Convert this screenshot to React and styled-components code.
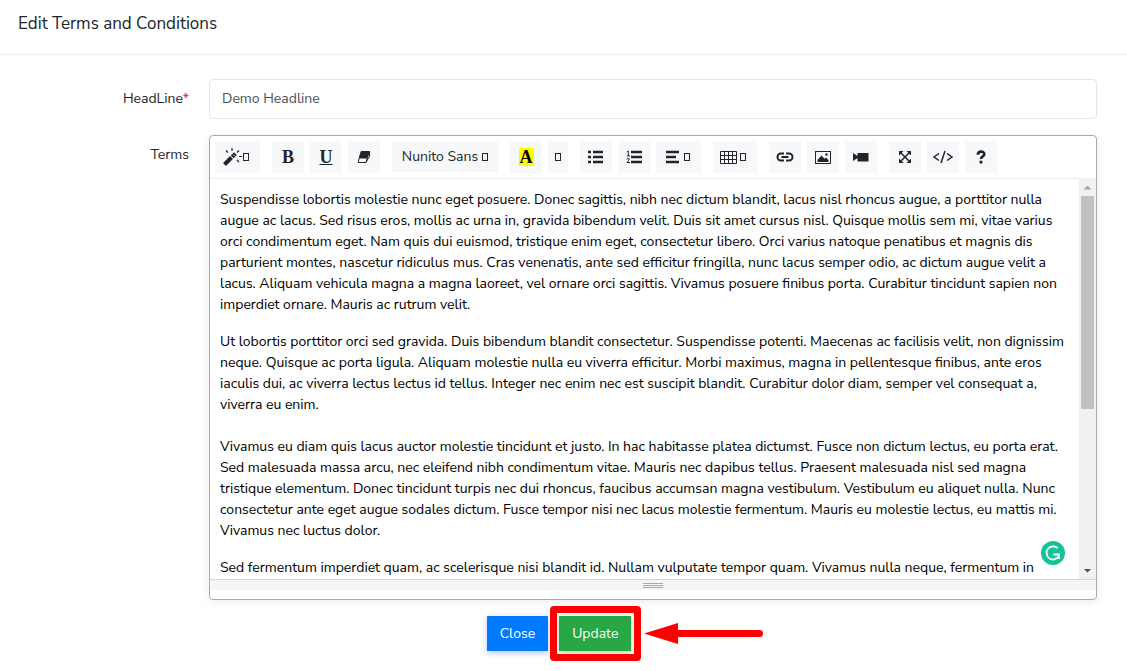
import React from "react";
import styled, { createGlobalStyle, css } from "styled-components";

const GlobalStyle = createGlobalStyle`
  *, *::before, *::after { box-sizing: border-box; }
  body {
    margin: 0;
    background: #fff;
    color: #212529;
    font: 14px/21px "Nunito Sans", Nunito, Lato, sans-serif;
  }
`;

const Header = styled.header`
  height: 55px;
  padding: 12px 18px;
  border-bottom: 1px solid #ebedf2;
`;

const Title = styled.h1`
  margin: 0;
  font-size: 17px;
  font-weight: 400;
  line-height: 24px;
`;

const Form = styled.form`
  display: grid;
  gap: 16px;
  padding: 24px 30px 20px;
`;

const Field = styled.div`
  display: grid;
  grid-template-columns: 159px minmax(0, 1fr);
  column-gap: 20px;
  align-items: start;
`;

const Label = styled.label`
  padding-top: 9px;
  text-align: right;
`;

const Required = styled.span`
  color: #f0263c;
`;

const TextInput = styled.input`
  width: 100%;
  height: 40px;
  padding: 0 12px 2px;
  border: 1px solid #e2e5ec;
  border-radius: 4px;
  color: #495057;
  font: inherit;
  outline: none;
`;

const Editor = styled.div`
  border: 1px solid #a9a9a9;
  border-radius: 4px;
  box-shadow: 0 2px 8px rgba(69, 65, 78, 0.1);
  padding-bottom: 9px;
`;

const Toolbar = styled.div`
  display: flex;
  flex-wrap: wrap;
  gap: 12px;
  padding: 5px;
  border-bottom: 1px solid #ebedf2;
`;

const Group = styled.div`
  display: flex;
  gap: 6px;
`;

const ToolButton = styled.button`
  display: flex;
  align-items: center;
  justify-content: center;
  width: ${(p) => p.$width || 32}px;
  height: 32px;
  padding: 0 ${(p) => (p.$menu ? 4 : 0)}px 0 0;
  border: 0;
  background: #f7f8fa;
  color: #212529;
  font: inherit;
  ${(p) => p.$wide && css`gap: 4px; height: 31px;`}
`;

const Caret = styled.span`
  width: 6px;
  height: 8px;
  border: 1px solid #212529;
`;

const Letter = styled.span`
  font: bold 18px/18px "Liberation Serif", serif;
  ${(p) => p.$underline && css`text-decoration: underline; text-decoration-thickness: 1px;`}
  ${(p) => p.$marked && css`background: #ff0; color: #000; padding: 0 1px;`}
`;

const Glyph = styled.svg`
  display: block;
  flex: none;
  width: 20px;
  height: 20px;
`;

const EditArea = styled.div`
  position: relative;
  display: grid;
  grid-template-columns: minmax(0, 1fr) 17px;
  height: 400px;
`;

const Content = styled.div`
  overflow: hidden;
  padding: 10px 10px 0;
  color: #000;
  white-space: nowrap;
  outline: none;

  p { margin: 0 0 16px; }
`;

const ScrollTrack = styled.div`
  display: grid;
  grid-template-rows: 17px 213px 1fr 17px;
  justify-items: center;
  background: #f1f1f1;
`;

const ScrollThumb = styled.div`
  width: 13px;
  background: #c1c1c1;
`;

const ScrollArrow = styled.span`
  align-self: center;
  width: 8px;
  height: 4px;
  background: ${(p) => (p.$down ? "#505050" : "#a3a3a3")};
  clip-path: ${(p) => (p.$down ? "polygon(0 0, 100% 0, 50% 100%)" : "polygon(50% 0, 100% 100%, 0 100%)")};
  grid-row: ${(p) => (p.$down ? 4 : 1)};
`;

const Assistant = styled.svg`
  position: absolute;
  right: 31px;
  bottom: 14px;
  width: 24px;
  height: 24px;
`;

const StatusBar = styled.div`
  display: flex;
  flex-direction: column;
  align-items: center;
  gap: 1px;
  height: 11px;
  padding-top: 3px;
  border-top: 1px solid #d5d5d5;
  background: #f5f5f5;
`;

const Grip = styled.span`
  width: 20px;
  height: 1px;
  background: #a9a9a9;
`;

const Actions = styled.div`
  display: flex;
  justify-content: center;
  gap: 11px;
  padding-right: 9px;
`;

const ActionButton = styled.button`
  height: 35px;
  padding: 0 13px;
  border: 0;
  background: ${(p) => (p.$green ? "#28a745" : "#007bff")};
  box-shadow: 0 2px 6px ${(p) => (p.$green ? "rgba(40, 167, 69, .4)" : "rgba(80, 110, 240, .4)")};
  color: #fff;
  font: inherit;
`;

const Highlighted = styled.div`
  position: relative;
`;

const Frame = styled.span`
  position: absolute;
  inset: -10px -10px -10px -9px;
  border: 7px solid #f00;
  border-radius: 4px;
  pointer-events: none;
`;

const Arrow = styled.svg`
  position: absolute;
  left: 85px;
  top: 7px;
  width: 120px;
  height: 21px;
  pointer-events: none;
`;

const dark = "#212529";

const Icons = {
  wand: (
    <>
      <path d="M1.5 17.5 L8.5 10.5" stroke={dark} strokeWidth="4" />
      <path d="M9.2 9.8 L12.4 6.6" stroke={dark} strokeWidth="4" />
      <path d="M10.2 7.6 L11.6 9" stroke="#fff" strokeWidth=".8" />
      <path d="M3 3.5 L5 5.5 M9 1 V4 M16 3.5 L14 5.5 M16 9.5 H19 M14 13 L16 15" stroke={dark} strokeWidth="1.2" />
    </>
  ),
  eraser: (
    <>
      <path d="M7.2 4.5 H15.5 L13.2 11 H5.2 Z" fill={dark} stroke={dark} strokeLinejoin="round" />
      <path d="M5.2 11 L4.2 15.5 H12 L13.2 11 M12 15.5 L15.5 9 V4.5" fill="none" stroke={dark} strokeLinejoin="round" />
    </>
  ),
  bullets: <path d="M2 5H5M2 10H5M2 15H5M7 5H17M7 10H17M7 15H17" stroke={dark} strokeWidth="2.6" />,
  numbers: (
    <>
      <path d="M7 5H18M7 10H18M7 15H18" stroke={dark} strokeWidth="2.4" />
      <path d="M2.8 5 L4.3 4 V9 M2.8 9H6" fill="none" stroke={dark} />
      <path d="M2.6 12.2 Q4 10.8 5.2 11.8 Q6 13 2.8 15.5 H6" fill="none" stroke={dark} />
    </>
  ),
  align: <path d="M2 5H15M2 10H12M2 15H15" stroke={dark} strokeWidth="2.4" />,
  table: (
    <path
      d="M.5 4.5H16.5V16.5H.5ZM.5 8.5H16.5M.5 12.5H16.5M4.5 4.5V16.5M8.5 4.5V16.5M12.5 4.5V16.5"
      fill="none"
      stroke={dark}
    />
  ),
  link: (
    <path
      d="M9 6.5 H6 A3.5 3.5 0 0 0 6 13.5 H9 M11 6.5 H14 A3.5 3.5 0 0 1 14 13.5 H11 M6.5 10 H13.5"
      fill="none"
      stroke={dark}
      strokeWidth="2"
    />
  ),
  image: (
    <>
      <rect x="2.5" y="4.5" width="15" height="12" fill="none" stroke={dark} />
      <path d="M4.5 15 V13 L8.5 8.5 L11.5 11.7 L13 10.5 L15.5 13 V15 Z" fill={dark} />
      <circle cx="13.5" cy="7.5" r="1.2" fill={dark} />
    </>
  ),
  video: <path d="M2 6 L6.5 9 V6 H17.5 V14.5 H6.5 V11 L2 14 Z" fill={dark} />,
  expand: (
    <>
      <path d="M5 5 L15 15 M15 5 L5 15" stroke={dark} strokeWidth="1.5" />
      <path d="M4 4 H8.5 L4 8.5Z M16 4 V8.5 L11.5 4Z M4 16 V11.5 L8.5 16Z M16 16 H11.5 L16 11.5Z" fill={dark} />
    </>
  ),
  code: <path d="M6 6.5 L1 10 L6 13.5 M14 6.5 L19 10 L14 13.5 M12 4 L8 16" fill="none" stroke={dark} strokeWidth="1.5" />,
  help: (
    <>
      <path d="M6.8 7.8 C7 3.6 13.3 3.8 13.3 7.2 C13.3 9.6 10 9.3 10 12" fill="none" stroke={dark} strokeWidth="2.6" />
      <path d="M8.6 13.7 H11.4 V16.5 H8.6Z" fill={dark} />
    </>
  ),
};

function Icon({ name }) {
  return (
    <Glyph viewBox="0 0 20 20" aria-hidden="true">
      {Icons[name]}
    </Glyph>
  );
}

function Tool({ icon, label, caret, width, children }) {
  return (
    <ToolButton type="button" aria-label={label} $width={width} $menu={Boolean(icon && caret)}>
      {icon ? <Icon name={icon} /> : children}
      {caret && <Caret />}
    </ToolButton>
  );
}

function Lines({ children }) {
  return children.map((line, i) => (
    <React.Fragment key={line}>
      {i > 0 && <br />}
      {line}
    </React.Fragment>
  ));
}

const first = [
  "Suspendisse lobortis molestie nunc eget posuere. Donec sagittis, nibh nec dictum blandit, lacus nisl rhoncus augue, a porttitor nulla",
  "augue ac lacus. Sed risus eros, mollis ac urna in, gravida bibendum velit. Duis sit amet cursus nisl. Quisque mollis sem mi, vitae varius",
  "orci condimentum eget. Nam quis dui euismod, tristique enim eget, consectetur libero. Orci varius natoque penatibus et magnis dis",
  "parturient montes, nascetur ridiculus mus. Cras venenatis, ante sed efficitur fringilla, nunc lacus semper odio, ac dictum augue velit a",
  "lacus. Aliquam vehicula magna a magna laoreet, vel ornare orci sagittis. Vivamus posuere finibus porta. Curabitur tincidunt sapien non",
  "imperdiet ornare. Mauris ac rutrum velit.",
];
const second = [
  "Ut lobortis porttitor orci sed gravida. Duis bibendum blandit consectetur. Suspendisse potenti. Maecenas ac facilisis velit, non dignissim",
  "neque. Quisque ac porta ligula. Aliquam molestie nulla eu viverra efficitur. Morbi maximus, magna in pellentesque finibus, ante eros",
  "iaculis dui, ac viverra lectus lectus id tellus. Integer nec enim nec est suscipit blandit. Curabitur dolor diam, semper vel consequat a,",
  "viverra eu enim.",
];
const third = [
  "Vivamus eu diam quis lacus auctor molestie tincidunt et justo. In hac habitasse platea dictumst. Fusce non dictum lectus, eu porta erat.",
  "Sed malesuada massa arcu, nec eleifend nibh condimentum vitae. Mauris nec dapibus tellus. Praesent malesuada nisl sed magna",
  "tristique elementum. Donec tincidunt turpis nec dui rhoncus, faucibus accumsan magna vestibulum. Vestibulum eu aliquet nulla. Nunc",
  "consectetur ante eget augue sodales dictum. Fusce tempor nisi nec lacus molestie fermentum. Mauris eu molestie lectus, eu mattis mi.",
  "Vivamus nec luctus dolor.",
];
const fourth = [
  "Sed fermentum imperdiet quam, ac scelerisque nisi blandit id. Nullam vulputate tempor quam. Vivamus nulla neque, fermentum in",
];

export default function App() {
  return (
    <>
      <GlobalStyle />
      <Header>
        <Title>Edit Terms and Conditions</Title>
      </Header>
      <Form onSubmit={(e) => e.preventDefault()}>
        <Field>
          <Label htmlFor="headline">
            HeadLine<Required>*</Required>
          </Label>
          <TextInput id="headline" defaultValue="Demo Headline" />
        </Field>
        <Field>
          <Label as="span" id="terms-label">Terms</Label>
          <Editor>
            <Toolbar role="toolbar" aria-label="Formatting">
              <Group>
                <Tool icon="wand" label="Style" caret width={45} />
              </Group>
              <Group>
                <Tool label="Bold"><Letter>B</Letter></Tool>
                <Tool label="Underline"><Letter $underline>U</Letter></Tool>
                <Tool icon="eraser" label="Remove formatting" />
              </Group>
              <Group>
                <ToolButton type="button" $width={106} $wide>
                  Nunito Sans <Caret />
                </ToolButton>
              </Group>
              <Group>
                <Tool label="Text colour"><Letter $marked>A</Letter></Tool>
                <Tool label="More colours" caret width={20} />
              </Group>
              <Group>
                <Tool icon="bullets" label="Bulleted list" />
                <Tool icon="numbers" label="Numbered list" />
                <Tool icon="align" label="Paragraph" caret width={45} />
              </Group>
              <Group>
                <Tool icon="table" label="Table" caret width={44} />
              </Group>
              <Group>
                <Tool icon="link" label="Link" />
                <Tool icon="image" label="Picture" />
                <Tool icon="video" label="Video" />
              </Group>
              <Group>
                <Tool icon="expand" label="Full screen" />
                <Tool icon="code" label="Code view" />
                <Tool icon="help" label="Help" />
              </Group>
            </Toolbar>
            <EditArea>
              <Content
                role="textbox"
                aria-multiline="true"
                aria-labelledby="terms-label"
                contentEditable
                suppressContentEditableWarning
                spellCheck={false}
              >
                <p><Lines>{first}</Lines></p>
                <p>
                  <Lines>{second}</Lines>
                  <br />
                  <br />
                  <Lines>{third}</Lines>
                </p>
                <p><Lines>{fourth}</Lines></p>
              </Content>
              <ScrollTrack>
                <ScrollArrow />
                <ScrollThumb />
                <ScrollArrow $down />
              </ScrollTrack>
              <Assistant viewBox="0 0 24 24" aria-hidden="true">
                <circle cx="12" cy="12" r="12" fill="#15c39a" />
                <path d="M16.8 7.2 A6.6 6.6 0 1 0 17.6 15.6 M12.5 13.5 H18 V18" fill="none" stroke="#fff" strokeWidth="1.8" />
              </Assistant>
            </EditArea>
            <StatusBar>
              <Grip />
              <Grip />
              <Grip />
            </StatusBar>
          </Editor>
        </Field>
        <Actions>
          <ActionButton type="button">Close</ActionButton>
          <Highlighted>
            <ActionButton type="submit" $green>Update</ActionButton>
            <Frame />
            <Arrow viewBox="0 0 120 21" aria-hidden="true">
              <path d="M0 10.5 L34 0 V21 Z" fill="#f00" />
              <path d="M32 10.5 H115.5" stroke="#f00" strokeWidth="7" strokeLinecap="round" />
            </Arrow>
          </Highlighted>
        </Actions>
      </Form>
    </>
  );
}
